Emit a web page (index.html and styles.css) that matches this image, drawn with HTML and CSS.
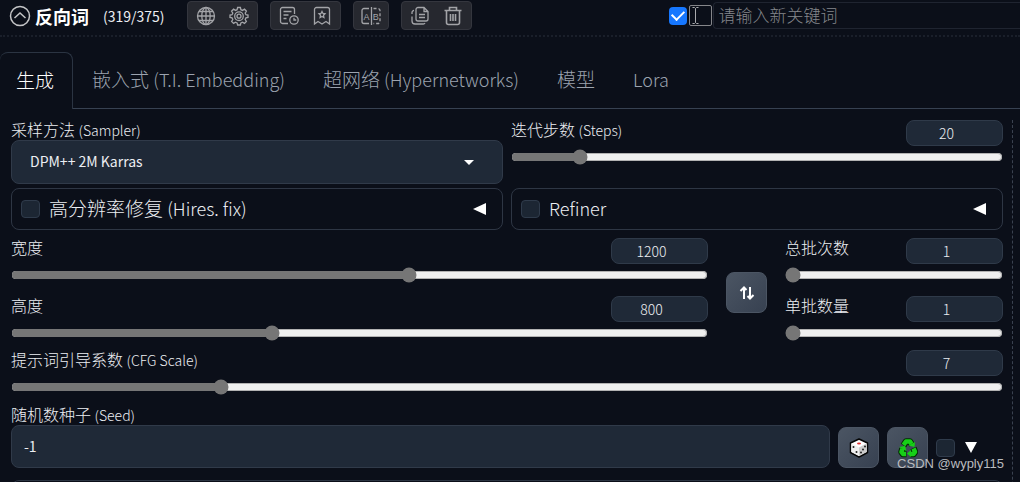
FILE: index.html
```html
<!DOCTYPE html>
<html lang="zh-CN">
<head>
<meta charset="utf-8">
<title>Stable Diffusion</title>
<link rel="stylesheet" href="styles.css">
</head>
<body>
<div class="app">
  <header class="topbar">
    <button class="icon-btn collapse" aria-label="折叠">
      <svg width="22" height="22" viewBox="0 0 22 22"><circle cx="11" cy="11" r="9.5"/><path d="M5.500 13 11 8l5.500 5"/></svg>
    </button>
    <h1 class="title">反向词</h1>
    <span class="count">(319/375)</span>
    <div class="tools">
      <div class="tool-group">
        <button class="icon-btn" aria-label="语言">
          <svg width="20" height="20" viewBox="0 0 20 20"><circle cx="10" cy="10" r="8.500"/><ellipse cx="10" cy="10" rx="4.200" ry="8.500"/><path d="M10 1.500v17M1.500 10h17M3 5.500h14M3 14.500h14"/></svg>
        </button>
        <button class="icon-btn" aria-label="设置">
          <svg width="20" height="20" viewBox="0 0 20 20"><path d="M8.600 1.500h2.800l.5 2.200 1.600.7 2-1.200 1.900 2-1.200 1.900.7 1.600 2.100.3v2.500l-2.100.4-.7 1.600 1.200 2-1.900 1.900-2-1.200-1.600.7-.5 2.100H8.600l-.5-2.100-1.600-.7-1.900 1.200-2-1.900 1.200-2-.7-1.600L1 11.500V9l2.100-.3.7-1.600-1.200-1.900 2-2 1.900 1.200 1.600-.7z"/><circle cx="10" cy="10.200" r="4.300"/><circle cx="10" cy="10.200" r="2"/></svg>
        </button>
      </div>
      <div class="tool-group">
        <button class="icon-btn" aria-label="历史">
          <svg width="20" height="20" viewBox="0 0 20 20"><path d="M9 17.500H3.500a2 2 0 0 1-2-2v-12a2 2 0 0 1 2-2h10a2 2 0 0 1 2 2V8M4.500 5.500h8M4.500 9h5M4.500 12.500h3"/><circle cx="15" cy="14" r="4.200"/><path d="M15 11.800V14h2.200"/></svg>
        </button>
        <button class="icon-btn" aria-label="收藏">
          <svg width="20" height="20" viewBox="0 0 20 20"><path d="M2.500 18V3.500a2 2 0 0 1 2-2h11a2 2 0 0 1 2 2V18L14 15.500 10 18l-4-2.500zM10 5.500l1 2 2 .3-1.500 1.500.4 2.200-1.900-1-1.900 1 .4-2.200L7 7.800l2-.3z"/></svg>
        </button>
      </div>
      <div class="tool-group single">
        <button class="icon-btn" aria-label="翻译">
          <svg width="20" height="20" viewBox="0 0 20 20"><path d="M8 2.500H3a2 2 0 0 0-2 2v11a2 2 0 0 0 2 2h5M10.500 1v18"/><path stroke-dasharray="3 2" d="M12.500 2.500H17a2 2 0 0 1 2 2v11a2 2 0 0 1-2 2h-4.500"/><text x="2.500" y="13.500">A</text><text x="11.700" y="13.500">B</text></svg>
        </button>
      </div>
      <div class="tool-group">
        <button class="icon-btn" aria-label="复制">
          <svg width="20" height="20" viewBox="0 0 20 20"><path d="M8 1.500h6l4 4V13a2 2 0 0 1-2 2H8a2 2 0 0 1-2-2V3.500a2 2 0 0 1 2-2zM14 1.500v4h4M9 8.500h6M9 11.500h6"/><path d="M4 4.500a2 2 0 0 0-2 2V8M2 10.500V15a3 3 0 0 0 3 3h8a2 2 0 0 0 2-1"/></svg>
        </button>
        <button class="icon-btn" aria-label="删除">
          <svg width="20" height="20" viewBox="0 0 20 20"><path d="M1.500 4.500h17M6.500 4.500v-3h7v3M3.500 4.500v12a2 2 0 0 0 2 2h9a2 2 0 0 0 2-2v-12M7.500 8v7M10 8v7M12.500 8v7" stroke-width="1.600"/></svg>
        </button>
      </div>
    </div>
    <div class="keyword">
      <input class="tick-blue" type="checkbox" checked aria-label="启用">
      <span class="cursor-box"><svg width="21" height="19" viewBox="0 0 21 19"><path d="M2.500 1.500h2l1 1 1-1h2M5.500 2.500v14M2.500 17.500h2l1-1 1 1h2"/></svg></span>
      <input class="keyword-input" type="text" placeholder="请输入新关键词" aria-label="新关键词">
    </div>
  </header>

  <nav class="tabs">
    <button class="tab active">生成</button>
    <button class="tab">嵌入式 <span class="tab-en">(T.I. Embedding)</span></button>
    <button class="tab">超网络 <span class="tab-en">(Hypernetworks)</span></button>
    <button class="tab">模型</button>
    <button class="tab"><span class="tab-en">Lora</span></button>
    <span class="tab-rest"></span>
  </nav>

  <main class="panel">
    <section class="pair">
      <div class="field">
        <label class="label" for="sampler">采样方法 <span class="en">(Sampler)</span></label>
        <div class="select-wrap">
          <select id="sampler" class="select"><option>DPM++ 2M Karras</option></select>
          <svg class="caret" width="10" height="5" viewBox="0 0 10 5"><path d="M0 0h10L5 5z"/></svg>
        </div>
      </div>
      <div class="slider">
        <div class="slider-head"><label class="label" for="steps">迭代步数 <span class="en">(Steps)</span></label><input class="num" type="number" value="20" aria-label="迭代步数"></div>
        <input id="steps" class="range" type="range" min="1" max="150" value="20">
      </div>
    </section>

    <section class="pair accordions">
      <div class="accordion">
        <input id="hires" class="tick" type="checkbox"><label for="hires">高分辨率修复 <span class="tab-en">(Hires. fix)</span></label>
        <button class="icon-btn arrow" aria-label="展开"><svg width="14" height="12" viewBox="0 0 14 12"><path d="M0 6 13 0v12z"/></svg></button>
      </div>
      <div class="accordion">
        <input id="refiner" class="tick" type="checkbox"><label for="refiner"><span class="tab-en">Refiner</span></label>
        <button class="icon-btn arrow" aria-label="展开"><svg width="14" height="12" viewBox="0 0 14 12"><path d="M0 6 13 0v12z"/></svg></button>
      </div>
    </section>

    <section class="sizes">
      <div class="stack">
        <div class="slider">
          <div class="slider-head"><label class="label" for="width">宽度</label><input class="num" type="number" value="1200" aria-label="宽度"></div>
          <input id="width" class="range" type="range" min="64" max="2048" step="8" value="1200">
        </div>
        <div class="slider">
          <div class="slider-head"><label class="label" for="height">高度</label><input class="num" type="number" value="800" aria-label="高度"></div>
          <input id="height" class="range" type="range" min="64" max="2048" step="8" value="800">
        </div>
      </div>
      <button class="tile" aria-label="交换宽高"><svg width="16" height="16" viewBox="0 0 16 16"><path class="swap" d="M5 14V2.500M1.500 6 5 2.500 7.500 5M11 2v11.500M8.500 11l2.500 2.500L14.500 10"/></svg></button>
      <div class="stack">
        <div class="slider">
          <div class="slider-head"><label class="label" for="batch-count">总批次数</label><input class="num" type="number" value="1" aria-label="总批次数"></div>
          <input id="batch-count" class="range" type="range" min="1" max="100" value="1">
        </div>
        <div class="slider">
          <div class="slider-head"><label class="label" for="batch-size">单批数量</label><input class="num" type="number" value="1" aria-label="单批数量"></div>
          <input id="batch-size" class="range" type="range" min="1" max="8" value="1">
        </div>
      </div>
    </section>

    <section class="slider cfg">
      <div class="slider-head"><label class="label" for="cfg">提示词引导系数 <span class="en">(CFG Scale)</span></label><input class="num" type="number" value="7" aria-label="提示词引导系数"></div>
      <input id="cfg" class="range" type="range" min="1" max="30" step="0.5" value="7">
    </section>

    <section class="seed">
      <div class="field seed-field">
        <label class="label" for="seed">随机数种子 <span class="en">(Seed)</span></label>
        <input id="seed" class="seed-input" type="number" value="-1">
      </div>
      <button class="tile" aria-label="随机种子">
        <svg width="20" height="20" viewBox="0 0 20 20"><path fill="#fff" stroke="#050505" stroke-width="1.500" stroke-linejoin="round" d="M10 1l8.500 4v9.500L10 19l-8.500-4.500V5z"/><path fill="#ccc" d="M10 9.500l7.500-4v8.500L10 18z"/><path fill="#eee" d="M2.500 5.500 10 9.500V18l-7.500-4z"/><ellipse cx="10" cy="5.500" rx="2" ry="1" fill="#d33"/><g fill="#222"><circle cx="4.500" cy="9" r="1"/><circle cx="7.500" cy="14" r="1"/><circle cx="12" cy="14.500" r="1"/><circle cx="14" cy="11.500" r="1"/><circle cx="16" cy="8.500" r="1"/></g></svg>
      </button>
      <button class="tile" aria-label="重用种子">
        <svg width="20" height="20" viewBox="0 0 20 20"><g fill="none" stroke-linejoin="round"><g stroke="#032b03" stroke-width="6.500"><path d="M5.500 7.500 8 3.500h4l2 3.500"/><path d="M15.500 10l1.500 4-1.500 2H12"/><path d="M4.500 10.500 3.500 14l1.500 2h3.500"/></g><g stroke="#17cf17" stroke-width="4.500"><path d="M5.500 7 8 3.500h4l1.500 2.500"/><path d="M15.500 10.500l1.500 3.500-1.500 2H12"/><path d="M4.500 10.500 3.500 14l1.500 2h3"/></g></g><g fill="#17cf17"><path d="M10.500 7.500 17 4l-.5 5z"/><path d="M13 12v7l-4-3.500z"/><path d="M1 9l6-1 1.500 5z"/></g></svg>
      </button>
      <div class="extra"><input id="extra" class="tick" type="checkbox" aria-label="额外"><svg width="12" height="12" viewBox="0 0 12 12"><path fill="#fff" d="M0 0h12L6 11z"/></svg></div>
    </section>

    <section class="next"></section>
  </main>
  <div class="watermark">CSDN @wyply115</div>
</div>
</body>
</html>
```
FILE: styles.css
```css
* { box-sizing: border-box; }
body {
  margin: 0;
  background: #0b0f19;
  color: #eceef2;
  font-family: "Noto Sans CJK SC", "Noto Sans", sans-serif;
  font-size: 16px;
  font-weight: 300;
}
button, input, select { font: inherit; color: inherit; margin: 0; }
svg { display: block; }
.app { position: relative; height: 100vh; overflow: hidden; }
.icon-btn { display: flex; padding: 0; border: 0; background: none; }
.icon-btn svg { fill: none; stroke: #a3a4a8; stroke-width: 1.300; }
.icon-btn text { fill: #a3a4a8; stroke: none; font: 9px "Liberation Sans", sans-serif; }

.topbar {
  display: flex;
  align-items: center;
  height: 37px;
  padding: 0 0 4px 9px;
  border-bottom: 2px dotted #1a1f2a;
}
.collapse svg { stroke: #c4c5c7; stroke-width: 1.500; }
.title { margin: 0 0 0 4px; font-size: 18px; line-height: 24px; font-weight: 700; color: #fff; }
.count { margin-left: 14px; font-size: 14px; font-weight: 400; }
.tools { display: flex; gap: 12px; margin-left: 22px; }
.tool-group {
  display: flex;
  justify-content: space-between;
  align-items: center;
  width: 71px;
  height: 29px;
  padding: 0 8px;
  border: 1px solid #34363e;
  border-radius: 4px;
  background: #26282f;
}
.tool-group.single { width: 36px; padding: 0 7px; }
.keyword { display: flex; align-items: center; flex: 1; margin-left: 197px; }
.tick-blue {
  appearance: none;
  width: 18px;
  height: 18px;
  border-radius: 4px;
  background: #1677ff;
  display: grid;
  place-items: center;
}
.tick-blue::after {
  content: "";
  width: 6px;
  height: 10px;
  margin-bottom: 3px;
  border: solid #fff;
  border-width: 0 2px 2px 0;
  transform: rotate(45deg);
}
.cursor-box { margin: 0 1px 0 2px; border: 1px solid #85868a; border-radius: 2px; }
.cursor-box svg { fill: none; stroke: #a9aaad; }
.keyword-input {
  flex: 1;
  min-width: 0;
  height: 27px;
  padding: 0 5px 2px;
  border: 1px solid #1f2430;
  border-right: 0;
  border-radius: 4px 0 0 4px;
  background: transparent;
  font-size: 17px;
}
.keyword-input::placeholder { color: #85878c; }

.tabs { display: flex; height: 57px; margin-top: 15px; }
.tab {
  padding: 0 19px 3px;
  border: 0;
  border-bottom: 1px solid #374151;
  background: none;
  color: #9ca3af;
  font-size: 19px;
  white-space: nowrap;
}
.tab.active {
  padding: 0 18px 3px 16px;
  border: 1px solid #2b3442;
  border-width: 1px 1px 0 0;
  border-radius: 8px 8px 0 0;
  color: #fff;
}
.tab-en { font-size: 18px; }
.tab-rest { flex: 1; border-bottom: 1px solid #374151; }

.panel {
  margin: 11px 7px 0 0;
  padding: 0 9px 0 11px;
  border-right: 1px dashed #3a4250;
}
.pair { display: grid; grid-template-columns: 1fr 1fr; gap: 8px; }
.label { line-height: 19px; white-space: nowrap; }
.en { font-size: 14px; }
.field { display: flex; flex-direction: column; }
.select-wrap { position: relative; }
.select {
  appearance: none;
  display: block;
  width: 100%;
  height: 44px;
  padding: 0 18px 2px;
  border: 1px solid #303a49;
  border-radius: 8px;
  background: #1f2937;
  font-size: 14px;
  font-weight: 400;
}
.caret { position: absolute; right: 29px; top: 20px; fill: #fff; pointer-events: none; }
.slider-head { display: flex; justify-content: space-between; align-items: flex-start; }
.num {
  appearance: textfield;
  width: 97px;
  height: 26px;
  padding: 0 16px 0 0;
  border: 1px solid #2f3a49;
  border-radius: 8px;
  background: #1f2937;
  font-size: 14px;
  font-weight: 300;
  text-align: center;
}
input::-webkit-inner-spin-button { appearance: none; margin: 0; }
.range { display: block; width: 100%; height: 16px; margin: 3px 0 0; accent-color: #767676; }
.accordions { margin-top: 4px; }
.accordion {
  display: flex;
  align-items: center;
  height: 42px;
  padding: 0 15px 0 9px;
  border: 1px solid #2e3644;
  border-radius: 8px;
  font-size: 19px;
}
.tick {
  appearance: none;
  width: 19px;
  height: 18px;
  border: 1px solid #2f3b4b;
  border-radius: 4px;
  background: #1c2633;
}
.accordion label { margin-left: 9px; padding-bottom: 2px; line-height: 26px; }
.arrow { margin-left: auto; }
.arrow svg { fill: #fff; stroke: none; }

.sizes {
  display: grid;
  grid-template-columns: minmax(0, 1fr) 41px 218px;
  column-gap: 18px;
  align-items: center;
  margin-top: 8px;
}
.sizes .tile { margin-top: 6px; }
.stack { display: grid; gap: 13px; }
.tile {
  display: grid;
  place-items: center;
  width: 41px;
  height: 41px;
  padding: 0;
  border: 1px solid #4b5563;
  border-radius: 8px;
  background: linear-gradient(135deg, #4b5563, #374151);
}
.swap { fill: none; stroke: #fff; stroke-width: 2; }
.cfg { margin-top: 9px; }
.seed { display: flex; align-items: flex-end; gap: 8px; margin-top: 10px; }
.seed-field { flex: 1; }
.seed-input {
  appearance: textfield;
  width: 100%;
  height: 43px;
  padding: 0 12px 2px;
  border: 1px solid #303a49;
  border-radius: 8px;
  background: #1f2937;
  font-size: 14px;
  font-weight: 400;
}
.extra { display: flex; align-items: center; gap: 10px; width: 67px; height: 41px; }
.next { height: 60px; margin-top: 12px; border: 1px solid #2b3442; border-radius: 8px; }
.watermark {
  position: absolute;
  right: 16px;
  bottom: 8px;
  color: #b9bbbf;
  font: 13px/20px "Liberation Sans", sans-serif;
}
```
